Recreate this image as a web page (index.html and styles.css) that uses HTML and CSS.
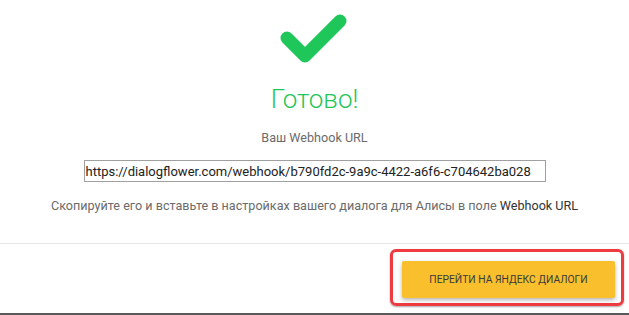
FILE: index.html
```html
<!DOCTYPE html>
<html lang="ru">
<head>
    <meta charset="UTF-8">
    <title>Готово!</title>
    <link rel="stylesheet" href="styles.css">
</head>
<body>
    <div class="dialog">
        <div class="dialog-body">
            <svg class="done-icon" width="70" height="52" viewBox="0 0 70 52">
                <polyline points="7,24 25,42 60,7" fill="none" stroke="#1fc65a" stroke-width="13" stroke-linecap="round" stroke-linejoin="round"/>
            </svg>
            <h2 class="done-title">Готово!</h2>
            <p class="hint">Ваш Webhook URL</p>
            <input class="url-field" type="text" value="https://dialogflower.com/webhook/b790fd2c-9a9c-4422-a6f6-c704642ba028" readonly>
            <p class="hint">Скопируйте его и вставьте в настройках вашего диалога для Алисы в поле <span class="strong">Webhook URL</span></p>
        </div>
        <div class="dialog-footer">
            <div class="highlight">
                <button class="go-button">Перейти на Яндекс Диалоги</button>
            </div>
        </div>
    </div>
</body>
</html>
```

FILE: styles.css
```css
body {
    margin: 0;
    font-family: Roboto, "Liberation Sans", sans-serif;
    background-color: white;
}
.dialog {
    height: 315px;
    box-sizing: border-box;
    border-bottom: 2px solid #5a5a5a;
    display: flex;
    flex-direction: column;
}
.dialog-body {
    flex: 1;
    display: flex;
    flex-direction: column;
    align-items: center;
    padding-top: 14px;
}
.done-icon {
    display: block;
}
.done-title {
    margin: 16px 0 0;
    font-size: 26px;
    line-height: 34px;
    font-weight: 300;
    color: #1fc65a;
}
.hint {
    margin: 14px 0 0;
    font-size: 12.6px;
    line-height: 16px;
    color: #6b6b6b;
}
.hint .strong {
    color: #333;
}
.url-field {
    margin-top: 14px;
    width: 462px;
    height: 22px;
    box-sizing: border-box;
    padding: 0 1px;
    border: 1px solid #a0a0a0;
    border-radius: 0;
    font-family: Roboto, "Liberation Sans", sans-serif;
    font-size: 13px;
    color: #222;
    outline: none;
}
.url-field + .hint {
    margin-top: 16px;
}
.dialog-footer {
    border-top: 1px solid #e6e6e6;
    display: flex;
    justify-content: flex-end;
    padding: 5px 5px 0 0;
    height: 70px;
    box-sizing: border-box;
}
.highlight {
    align-self: flex-start;
    border: 3px solid #ef3a3f;
    border-radius: 6px;
    padding: 9px 6px 5px 9px;
    box-shadow: 0 1px 2px rgba(0, 0, 0, 0.35);
}
.go-button {
    display: block;
    width: 213px;
    height: 37px;
    border: none;
    border-radius: 2px;
    background-color: #f9bf2c;
    box-shadow: 0 2px 4px rgba(0, 0, 0, 0.3);
    font-family: Roboto, "Liberation Sans", sans-serif;
    font-size: 10.3px;
    text-transform: uppercase;
    color: #3a3a3a;
    cursor: pointer;
}
```
